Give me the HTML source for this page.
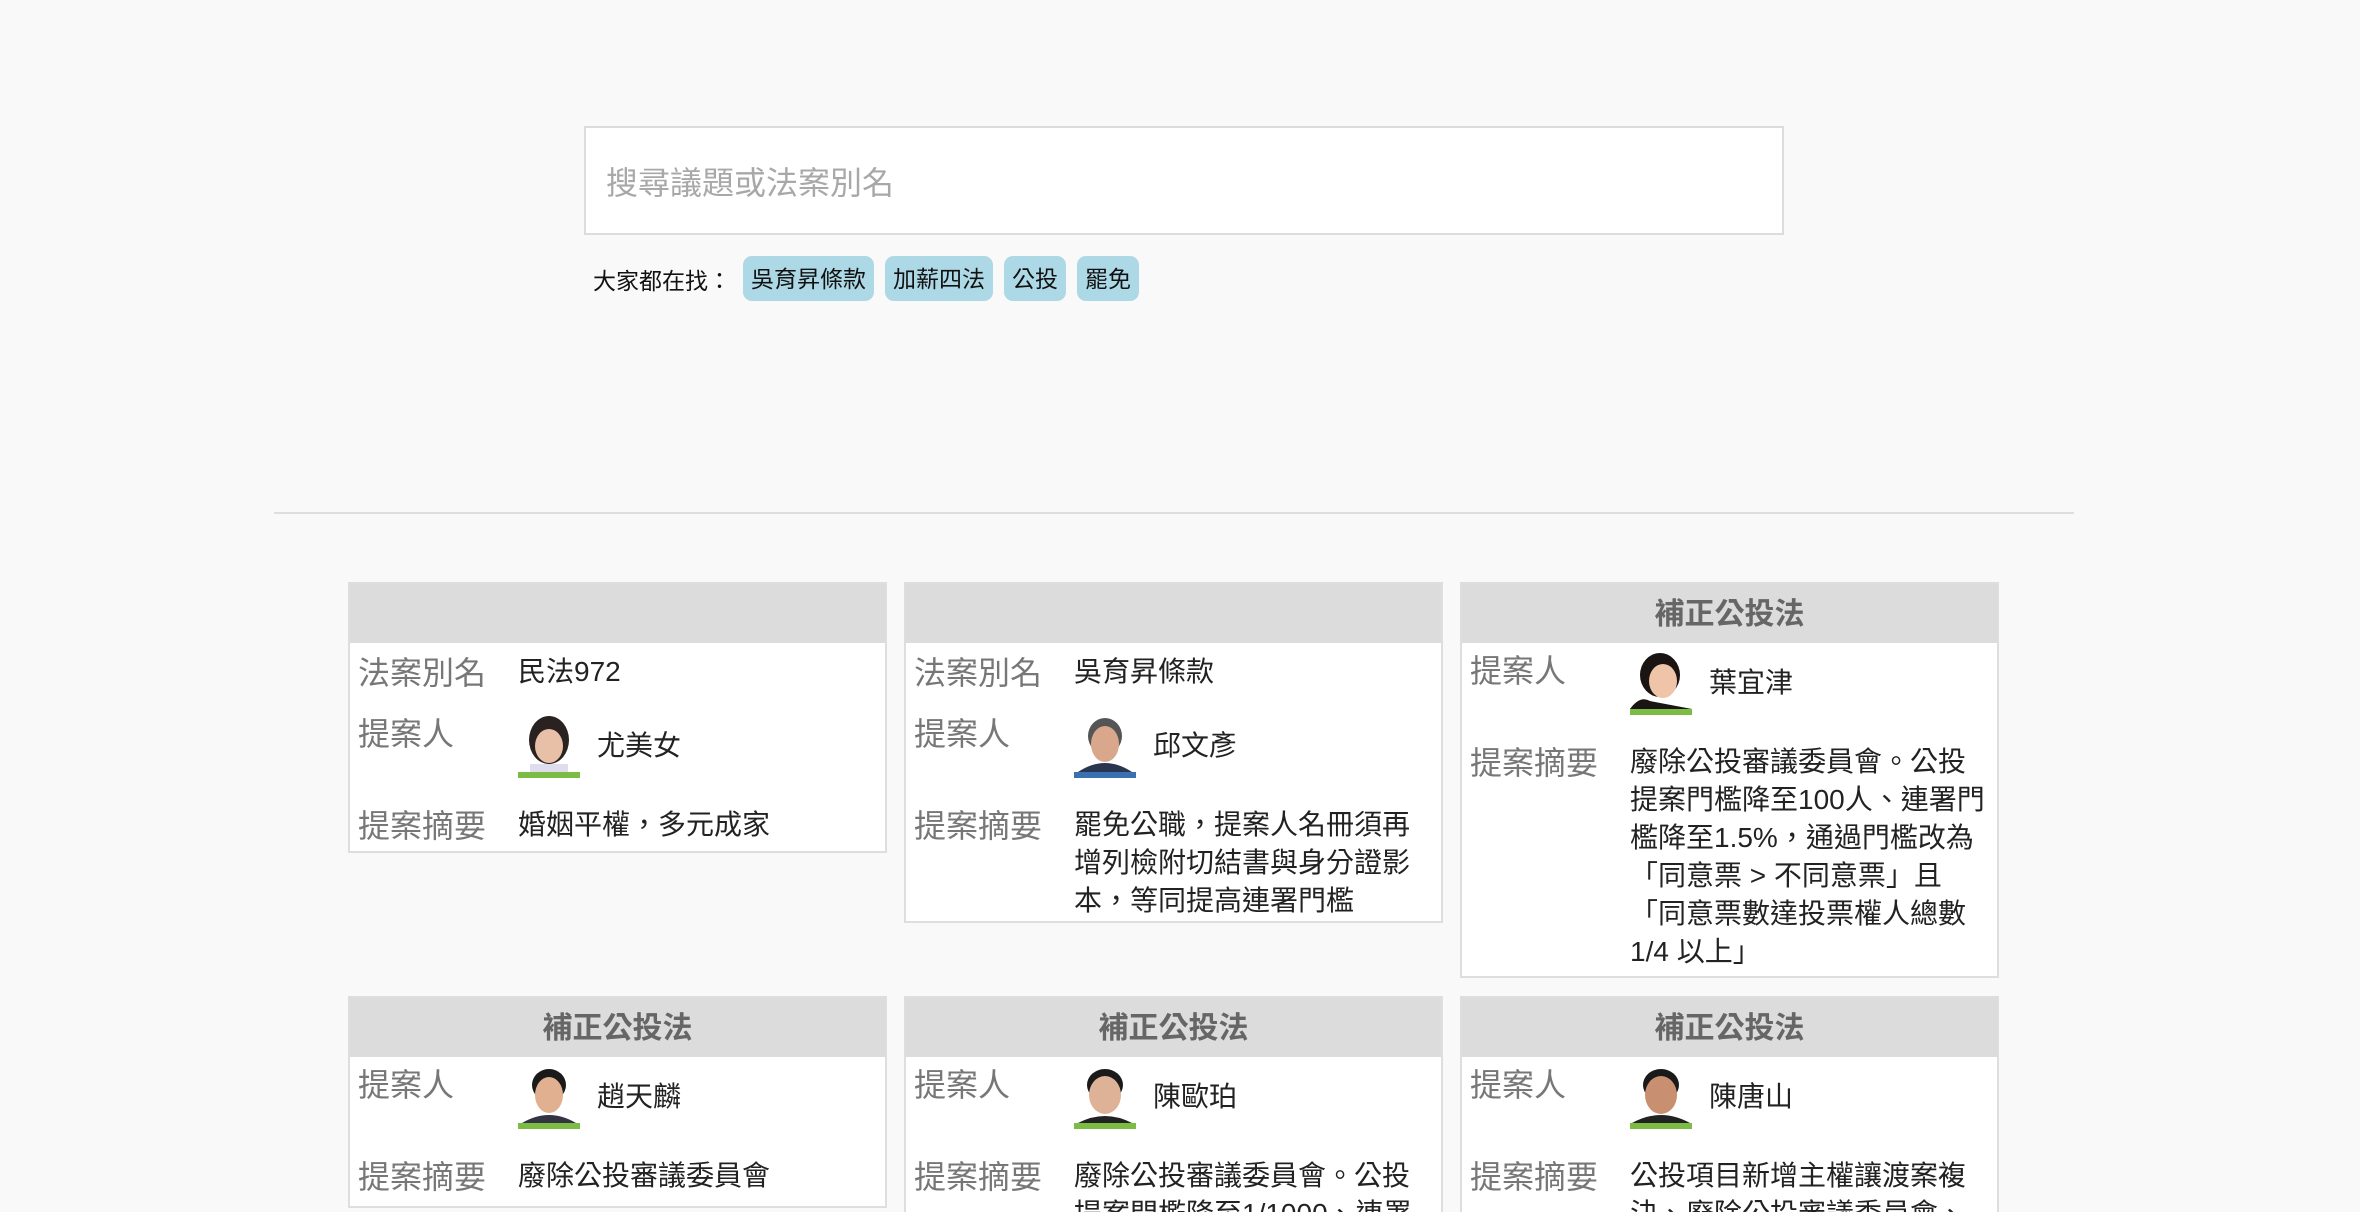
<!DOCTYPE html>
<html><head><meta charset="utf-8">
<style>
*{box-sizing:border-box;margin:0;padding:0}
html,body{width:2360px;height:1212px;overflow:hidden;background:#f9f9f9;font-family:"Liberation Sans","Noto Sans CJK TC",sans-serif;color:#222}
.search{position:absolute;left:584px;top:126px;width:1200px;height:109px;border:2px solid #dcdcdc;background:#fff;}
.search span{position:absolute;left:20px;top:3px;line-height:105px;font-size:32px;color:#a8a8a8}
.tags{position:absolute;left:593px;top:256px;height:45px;display:flex;align-items:center;font-size:23px;color:#111}
.tag{background:#add8e6;border-radius:9px;height:45px;line-height:47px;padding:0 8px;margin-right:11px}
.hr{position:absolute;left:274px;top:512px;width:1800px;height:2px;background:#dedede}
.card{position:absolute;width:539px;border:2px solid #dedede;background:#fff;overflow:hidden}
.hd{height:61px;background:#dcdcdc;text-align:center;font-size:30px;font-weight:bold;color:#666;line-height:66px;margin:-2px -2px 0}
.bd{padding:8px 8px 8px 8px}
.row{display:flex;align-items:flex-start}
.lb{width:160px;flex:none;font-size:32px;color:#777;line-height:40px}
.v{font-size:28px;line-height:38px;white-space:nowrap;color:#222}
.alias{margin-top:2px}
.person{margin-top:21px}
.person.first{margin-top:0}
.person .v{display:flex;align-items:center}
.ph{width:62px;height:64px;position:relative;margin-right:17px;flex:none}
.ph svg{display:block}
.ph .bar{position:absolute;left:0;bottom:0;width:62px;height:6px;background:#7cbb44}
.sum{margin-top:28px}
</style></head><body>
<div class="search"><span>搜尋議題或法案別名</span></div>
<div class="tags"><span style="margin-right:12px">大家都在找：</span><span class="tag">吳育昇條款</span><span class="tag">加薪四法</span><span class="tag">公投</span><span class="tag">罷免</span></div>
<div class="hr"></div>

<div class="card" style="left:348px;top:582px;height:271px">
<div class="hd"></div>
<div class="bd">
<div class="row alias"><div class="lb">法案別名</div><div class="v">民法972</div></div>
<div class="row person"><div class="lb">提案人</div><div class="v"><div class="ph"><svg width="62" height="58"><ellipse cx="31" cy="26" rx="20" ry="24" fill="#2a2220"/><ellipse cx="31" cy="32" rx="14" ry="17" fill="#e8c0a8"/><rect x="12" y="50" width="38" height="8" fill="#dde"/></svg><div class="bar"></div></div>尤美女</div></div>
<div class="row sum"><div class="lb">提案摘要</div><div class="v">婚姻平權，多元成家</div></div>
</div></div>

<div class="card" style="left:904px;top:582px;height:341px">
<div class="hd"></div>
<div class="bd">
<div class="row alias"><div class="lb">法案別名</div><div class="v">吳育昇條款</div></div>
<div class="row person"><div class="lb">提案人</div><div class="v"><div class="ph"><svg width="62" height="58"><ellipse cx="31" cy="22" rx="17" ry="18" fill="#555"/><ellipse cx="31" cy="30" rx="14" ry="18" fill="#d9a88c"/><path d="M4 58 Q31 40 58 58Z" fill="#2a3550"/></svg><div class="bar" style="background:#3a6fb0"></div></div>邱文彥</div></div>
<div class="row sum"><div class="lb">提案摘要</div><div class="v">罷免公職，提案人名冊須再<br>增列檢附切結書與身分證影<br>本，等同提高連署門檻</div></div>
</div></div>

<div class="card" style="left:1460px;top:582px;height:396px">
<div class="hd">補正公投法</div>
<div class="bd">
<div class="row person first"><div class="lb">提案人</div><div class="v"><div class="ph"><svg width="62" height="58"><ellipse cx="30" cy="24" rx="20" ry="22" fill="#1a1412"/><ellipse cx="33" cy="30" rx="14" ry="17" fill="#f0c4a8"/><path d="M0 58 Q10 44 20 50 L62 58Z" fill="#1a1412"/></svg><div class="bar"></div></div>葉宜津</div></div>
<div class="row sum"><div class="lb">提案摘要</div><div class="v">廢除公投審議委員會。公投<br>提案門檻降至100人、連署門<br>檻降至1.5%，通過門檻改為<br>「同意票 &gt; 不同意票」且<br>「同意票數達投票權人總數<br>1/4 以上」</div></div>
</div></div>

<div class="card" style="left:348px;top:996px;height:212px">
<div class="hd">補正公投法</div>
<div class="bd">
<div class="row person first"><div class="lb">提案人</div><div class="v"><div class="ph"><svg width="62" height="58"><ellipse cx="31" cy="20" rx="17" ry="16" fill="#1a1a1a"/><ellipse cx="31" cy="30" rx="14" ry="18" fill="#e0b090"/><path d="M4 58 Q31 42 58 58Z" fill="#334"/></svg><div class="bar"></div></div>趙天麟</div></div>
<div class="row sum"><div class="lb">提案摘要</div><div class="v">廢除公投審議委員會</div></div>
</div></div>

<div class="card" style="left:904px;top:996px;height:216px;border-bottom:none">
<div class="hd">補正公投法</div>
<div class="bd">
<div class="row person first"><div class="lb">提案人</div><div class="v"><div class="ph"><svg width="62" height="58"><ellipse cx="31" cy="20" rx="18" ry="16" fill="#1a1a1a"/><ellipse cx="31" cy="30" rx="16" ry="19" fill="#deb296"/><path d="M4 58 Q31 44 58 58Z" fill="#222"/></svg><div class="bar"></div></div>陳歐珀</div></div>
<div class="row sum"><div class="lb">提案摘要</div><div class="v">廢除公投審議委員會。公投<br>提案門檻降至1/1000、連署</div></div>
</div></div>

<div class="card" style="left:1460px;top:996px;height:216px;border-bottom:none">
<div class="hd">補正公投法</div>
<div class="bd">
<div class="row person first"><div class="lb">提案人</div><div class="v"><div class="ph"><svg width="62" height="58"><ellipse cx="31" cy="20" rx="18" ry="16" fill="#1a1a1a"/><ellipse cx="31" cy="30" rx="16" ry="19" fill="#c89070"/><path d="M2 58 Q31 42 60 58Z" fill="#222"/></svg><div class="bar"></div></div>陳唐山</div></div>
<div class="row sum"><div class="lb">提案摘要</div><div class="v">公投項目新增主權讓渡案複<br>決、廢除公投審議委員會、</div></div>
</div></div>
</body></html>
